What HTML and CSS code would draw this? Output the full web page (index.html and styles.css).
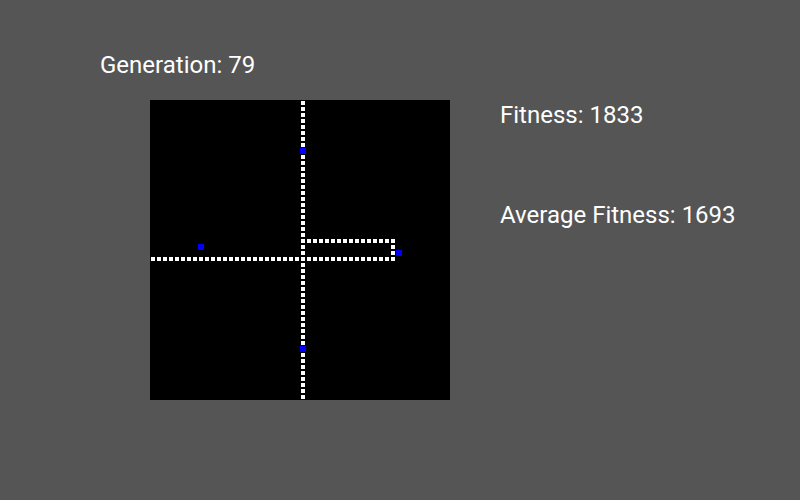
FILE: index.html
```html
<!DOCTYPE html>
<html lang="en">
<head>
<meta charset="UTF-8">
<meta name="viewport" content="width=device-width, initial-scale=1.0">
<title>Snake Evolution</title>
<link rel="stylesheet" href="styles.css">
</head>
<body>
<div class="page">
  <div class="generation">Generation: <span id="gen">79</span></div>
  <div class="main">
    <canvas id="board" width="300" height="300"></canvas>
    <div class="stats">
      <div class="stat">Fitness: <span id="fitness">1833</span></div>
      <div class="stat">Average Fitness: <span id="avg">1693</span></div>
    </div>
  </div>
</div>

<script>
const CELL = 6;
const canvas = document.getElementById("board");
const ctx = canvas.getContext("2d");

// snake body cells as [col, row]
let body = [];
for (let r = 0; r < 50; r++) body.push([25, r]);
for (let c = 0; c <= 40; c++) body.push([c, 26]);
for (let c = 26; c <= 40; c++) body.push([c, 23]);
for (let r = 23; r <= 26; r++) body.push([40, r]);

let food = [[25, 8], [8, 24], [41, 25], [25, 41]];

function draw() {
  ctx.fillStyle = "#000";
  ctx.fillRect(0, 0, canvas.width, canvas.height);

  ctx.fillStyle = "#fff";
  body.forEach(function (p) {
    ctx.fillRect(p[0] * CELL + 1, p[1] * CELL + 1, CELL - 2, CELL - 2);
  });

  ctx.fillStyle = "#0000ff";
  food.forEach(function (p) {
    ctx.fillRect(p[0] * CELL, p[1] * CELL, CELL, CELL);
  });
}

draw();
</script>
</body>
</html>
```

FILE: styles.css
```css
body {
  margin: 0;
  padding: 0;
  background-color: #555555;
  font-family: Roboto, "Liberation Sans", sans-serif;
  color: #fff;
  font-size: 24px;
  height: 100vh;
}

.page {
  padding-top: 51px;
}

.generation {
  margin-left: 100px;
  line-height: 28px;
}

.main {
  display: flex;
  margin-top: 21px;
  margin-left: 150px;
}

#board {
  display: block;
  width: 300px;
  height: 300px;
}

.stats {
  margin-left: 50px;
  padding-top: 1px;
  display: flex;
  flex-direction: column;
  gap: 72px;
}

.stat {
  line-height: 28px;
}
```
